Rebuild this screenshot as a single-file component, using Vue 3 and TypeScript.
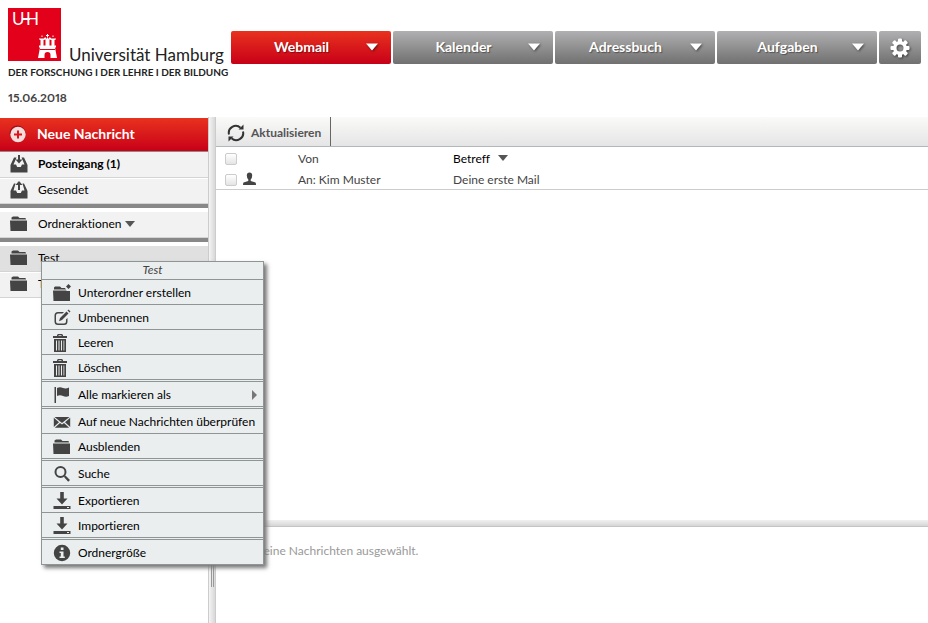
<script setup lang="ts">
import { ref } from 'vue'

interface MenuEntry {
  label: string
  icon: string
  groupStart?: boolean
  submenu?: boolean
}

const tabs = ['Webmail', 'Kalender', 'Adressbuch', 'Aufgaben']
const activeTab = ref('Webmail')
const selected = ref(false)
const allSelected = ref(false)

const icons: Record<string, string> = {
  folder: 'M1.500 4V2.500L3 1.500H8L9.500 3H15.500L16 4.500H1.500ZM0 5.500H17V16H.500Z',
  folderNew: 'M1 5V3.500L2 2.500H7L8.500 4H12L13 5.500H1ZM0 6.500H13L14 7H17V17H.500ZM15.500 0L18 2.500L15.500 5L13 2.500Z',
  inbox: 'M4 2.500H6.500L3.500 9.500H6L7.200 12H10.800L12 9.500H14.500L11.500 2.500H14L17.500 10V17.500H.500V10ZM8 0H10V4.500H12.500L9 8.500L5.500 4.500H8Z',
  sent: 'M4 2.500H5.500L3.500 9.500H6L7.200 12H10.800L12 9.500H14.500L12.500 2.500H14L17.500 10V17.500H.500V10ZM9 0L12.500 4H10V9H8V4H5.500Z',
  edit: 'M11 3H5Q1.500 3 1.500 6.500V12.500Q1.500 16 5 16H11Q14.500 16 14.500 12.500V9L13 10.500V12.500Q13 14.500 11 14.500H5Q3 14.500 3 12.500V6.500Q3 4.500 5 4.500H9.500ZM13.500 2.500L15.500 4.500L9 11L6 12.200L7 9ZM14.500 1.500L15.500.500L17.500 2.500L16.500 3.500Z',
  trash: 'M0 2H4V1L5 0H9L10 1V2H14V4H0ZM5.500 1.300V2H8.500V1.300ZM1 5H13V18H1ZM3 6.500V16.500H4V6.500ZM5.500 6.500V16.500H6.500V6.500ZM8 6.500V16.500H9V6.500ZM10.500 6.500V16.500H11.300V6.500Z',
  flag: 'M1.500 1H3V17H1.500ZM4 2Q7 .500 10 2Q13 3 16 1.500V10Q13 11.500 10 10Q7 8.500 4 10Z',
  mail: 'M1.500 4H16.500L9 10ZM.800 4.800L6 9.200L.800 14ZM17.200 4.800V14L12 9.200ZM1.800 14.800L7 10L9 11.600L11 10L16.200 14.800Z',
  search: 'M7.500 1A6 6 0 1 0 7.500 13A6 6 0 1 0 7.500 1ZM7.500 3A4 4 0 1 1 7.500 11A4 4 0 1 1 7.500 3ZM11 12L12.500 10.500L17 15L15.200 16.800Z',
  download: 'M7.200 0H10.800V6.500H14.500L9 12.500L3.500 6.500H7.200ZM.500 14H17.500V17H.500ZM14 15V16H16V15Z',
  info: 'M9 .800A8.200 8.200 0 1 0 9 17.200A8.200 8.200 0 1 0 9 .800ZM7.800 3.500H10.500V6H7.800ZM6.500 7.500H10.500V12.500H11.800V14H6.500V12.500H7.800V9H6.500Z',
  person: 'M8.500 1.500Q11.200 1.500 11.200 4.500Q11.200 7 9.700 8.500V10L14.500 11.500Q15 12 15 14H2Q2 12 2.500 11.500L7.300 10V8.500Q5.800 7 5.800 4.500Q5.800 1.500 8.500 1.500Z',
}

const menu: MenuEntry[] = [
  { label: 'Unterordner erstellen', icon: 'folderNew' },
  { label: 'Umbenennen', icon: 'edit' },
  { label: 'Leeren', icon: 'trash' },
  { label: 'Löschen', icon: 'trash' },
  { label: 'Alle markieren als', icon: 'flag', groupStart: true, submenu: true },
  { label: 'Auf neue Nachrichten überprüfen', icon: 'mail', groupStart: true },
  { label: 'Ausblenden', icon: 'folder' },
  { label: 'Suche', icon: 'search', groupStart: true },
  { label: 'Exportieren', icon: 'download', groupStart: true },
  { label: 'Importieren', icon: 'download' },
  { label: 'Ordnergröße', icon: 'info', groupStart: true },
]
</script>

<template>
  <div class="page">
    <header class="header">
      <div class="brand">
        <a class="logo" href="#">
          <span class="logo-row">
            <svg class="crest" viewBox="0 0 53 53" aria-hidden="true">
              <rect width="53" height="53" fill="#e2001a" />
              <g class="crest-text" fill="#fff">
                <text x="4" y="17">U</text>
                <text x="18" y="17">H</text>
                <rect x="14" y="10" width="8" height="2" />
              </g>
              <path
                fill="#fff"
                d="M30 50L32 39.500H31V37.500H32.500V32H31.500V30H32.500V31H33.500V30H34.500V31H35.500V30H36.500V32H35.500V37.500H37.500V31.500H36.500V29.500H38V30.500H39V29.500H40V30.500H41V29.500H42.500V31.500H41.500V37.500H43.500V32H42.500V30H43.500V31H44.500V30H45.500V31H46.500V30H47.500V32H46.500V37.500H48V39.500H47L49 50H42.500V47Q42.500 44 39.500 44Q36.500 44 36.500 47V50ZM39 26H40V27H41V28H40V29H39V28H38V27H39ZM33.500 27.500H34.500V29H33.500ZM44.500 27.500H45.500V29H44.500Z"
              />
              <path stroke="#e2001a" stroke-width="1" fill="none" d="M32 41.500H47" />
            </svg>
            <span class="wordmark">Universität Hamburg</span>
          </span>
          <span class="tagline">DER FORSCHUNG I DER LEHRE I DER BILDUNG</span>
        </a>
        <time class="date" datetime="2018-06-15">15.06.2018</time>
      </div>
      <nav class="tabs">
        <a
          v-for="tab in tabs"
          :key="tab"
          href="#"
          class="tab"
          :class="{ active: tab === activeTab }"
          @click.prevent="activeTab = tab"
        >
          <span class="tab-label">{{ tab }}</span>
          <svg class="tab-arrow" viewBox="0 0 12 8" aria-hidden="true"><path d="M0 .500H12L6 7.500Z" fill="#fff" /></svg>
        </a>
        <button class="settings" type="button" aria-label="Einstellungen">
          <svg viewBox="-10 -10 20 20" aria-hidden="true">
            <g fill="#fff">
              <rect v-for="n in 8" :key="n" x="-2" y="-9.500" width="4" height="5" rx="1" :transform="`rotate(${n * 45})`" />
            </g>
            <circle r="5.200" fill="none" stroke="#fff" stroke-width="3.400" />
          </svg>
        </button>
      </nav>
    </header>

    <div class="workspace">
      <aside class="sidebar">
        <button class="compose" type="button">
          <svg class="icon" viewBox="0 0 18 18" aria-hidden="true">
            <circle cx="8.500" cy="8.500" r="8" fill="#a30d14" />
            <circle cx="9" cy="9.500" r="7.700" fill="#f3dcdc" />
            <path d="M8 5.500H10V8.500H13V10.500H10V13.500H8V10.500H5V8.500H8Z" fill="#d9141c" />
          </svg>
          Neue Nachricht
        </button>
        <a class="folder unread" href="#">
          <svg class="icon" viewBox="0 0 18 18" aria-hidden="true"><path :d="icons.inbox" /></svg>
          Posteingang (1)
        </a>
        <a class="folder" href="#">
          <svg class="icon" viewBox="0 0 18 18" aria-hidden="true"><path :d="icons.sent" /></svg>
          Gesendet
        </a>
        <div class="rule"></div>
        <button class="folder" type="button">
          <svg class="icon" viewBox="0 0 18 18" aria-hidden="true"><path :d="icons.folder" /></svg>
          Ordneraktionen
          <svg class="caret" viewBox="0 0 10 6" aria-hidden="true"><path d="M0 0H10L5 6Z" /></svg>
        </button>
        <div class="rule"></div>
        <a class="folder current" href="#">
          <svg class="icon" viewBox="0 0 18 18" aria-hidden="true"><path :d="icons.folder" /></svg>
          Test
        </a>
        <a class="folder" href="#">
          <svg class="icon" viewBox="0 0 18 18" aria-hidden="true"><path :d="icons.folder" /></svg>
          Test
        </a>
      </aside>

      <div class="splitter"><span class="grip"></span></div>

      <main class="content">
        <div class="toolbar">
          <button class="refresh" type="button">
            <svg class="icon" viewBox="0 0 18 18" aria-hidden="true">
              <g fill="none" stroke="#333" stroke-width="2">
                <path d="M2 10.500A7 7 0 0 1 13.500 3.700" />
                <path d="M16 7.500A7 7 0 0 1 4.500 14.300" />
              </g>
              <path fill="#333" d="M11.500 5.500H16.500V.500ZM6.500 12.500H1.500V17.500Z" />
            </svg>
            Aktualisieren
          </button>
        </div>

        <table class="messages">
          <colgroup>
            <col class="col-check" />
            <col class="col-state" />
            <col class="col-from" />
            <col />
          </colgroup>
          <thead>
            <tr>
              <th><input v-model="allSelected" type="checkbox" aria-label="Alle auswählen" /></th>
              <th></th>
              <th>Von</th>
              <th class="sorted">
                Betreff
                <svg class="caret" viewBox="0 0 10 6" aria-hidden="true"><path d="M0 0H10L5 6Z" /></svg>
              </th>
            </tr>
          </thead>
          <tbody>
            <tr>
              <td><input v-model="selected" type="checkbox" aria-label="Nachricht auswählen" /></td>
              <td><svg class="icon" viewBox="0 0 18 18" aria-hidden="true"><path :d="icons.person" /></svg></td>
              <td>An: Kim Muster</td>
              <td>Deine erste Mail</td>
            </tr>
          </tbody>
        </table>

        <div class="preview-splitter"></div>
        <section class="preview">
          <p>Keine Nachrichten ausgewählt.</p>
        </section>
      </main>
    </div>

    <div class="context-menu" role="menu">
      <div class="menu-title">Test</div>
      <button
        v-for="entry in menu"
        :key="entry.label"
        class="menu-item"
        :class="{ 'group-start': entry.groupStart }"
        type="button"
        role="menuitem"
      >
        <svg class="icon" viewBox="0 0 18 18" aria-hidden="true"><path fill-rule="evenodd" :d="icons[entry.icon]" /></svg>
        <span class="menu-label">{{ entry.label }}</span>
        <svg v-if="entry.submenu" class="submenu" viewBox="0 0 5 10" aria-hidden="true"><path d="M0 0L5 5L0 10Z" /></svg>
      </button>
    </div>
  </div>
</template>

<style>
body {
  margin: 0;
  background: #fff;
}
</style>

<style scoped>
.page {
  position: relative;
  display: flex;
  flex-direction: column;
  min-height: 100vh;
  font-family: Lato, "Noto Sans", sans-serif;
  font-size: 12px;
  font-variant-ligatures: none;
  line-height: 16px;
  color: #444;
}

.page * {
  box-sizing: border-box;
}

a {
  color: inherit;
  text-decoration: none;
}

button {
  margin: 0;
  border: 0;
  font: inherit;
  font-variant-ligatures: none;
  text-align: left;
  cursor: pointer;
}

.icon {
  flex: none;
  display: block;
  width: 18px;
  height: 18px;
  fill: #444;
}

.caret {
  width: 10px;
  height: 6px;
  fill: #555;
}

.header {
  display: flex;
  align-items: flex-start;
  height: 117px;
  padding-right: 7px;
}

.brand {
  flex: none;
  width: 231px;
  padding: 8px 0 0 8px;
}

.logo,
.logo-row {
  display: flex;
}

.logo {
  flex-direction: column;
  white-space: nowrap;
  color: #222;
}

.logo-row {
  align-items: flex-end;
  gap: 8px;
}

.crest {
  width: 53px;
  height: 53px;
}

.crest-text {
  font-size: 17px;
}

.wordmark {
  font-size: 17px;
  line-height: 12px;
}

.tagline {
  margin-top: 4px;
  font-size: 10px;
  line-height: 14px;
  font-weight: 700;
}

.date {
  display: block;
  margin-top: 11px;
  font-weight: 700;
  font-variant-numeric: proportional-nums;
}

.tabs {
  flex: 1;
  display: flex;
  gap: 2px;
  padding-top: 31px;
}

.tab,
.settings {
  display: flex;
  align-items: center;
  height: 33px;
  border-radius: 2px;
  background: linear-gradient(#b0b0b2, #707070);
  color: #fff;
}

.tab {
  flex: 1;
  padding: 0 13px 2px 14px;
  font-size: 14px;
  font-weight: 700;
  text-shadow: 1px 1px 1px rgba(0, 0, 0, 0.4);
}

.tab.active {
  background: linear-gradient(#e8321e, #c80018);
}

.tab-label {
  flex: 1;
  padding-right: 8px;
  text-align: center;
}

.tab-arrow {
  width: 12px;
  height: 8px;
  filter: drop-shadow(1px 1px 1px rgba(0, 0, 0, 0.5));
}

.settings {
  flex: none;
  justify-content: center;
  width: 42px;
  padding: 0;
}

.settings svg {
  width: 20px;
  height: 20px;
  filter: drop-shadow(1px 1px 1px rgba(0, 0, 0, 0.5));
}

.workspace {
  flex: 1;
  display: flex;
}

.sidebar {
  flex: none;
  display: flex;
  flex-direction: column;
  width: 208px;
  padding-top: 1px;
}

.compose,
.folder {
  display: flex;
  align-items: center;
  gap: 10px;
  width: 100%;
  padding: 0 10px 2px;
}

.compose {
  height: 34px;
  padding-left: 9px;
  border-bottom: 1px solid #8a8a8a;
  background: linear-gradient(#e8321e, #c80018);
  color: #fff;
  font-size: 14px;
  font-weight: 700;
}

.folder {
  height: 26px;
  border-bottom: 1px solid #d4d4d4;
  background: #f2f2f2;
  color: #000;
}

.folder + .folder {
  border-top: 1px solid #fff;
}

.folder .caret {
  margin-left: -6px;
}

.unread {
  font-weight: 700;
}

.current {
  background: #e0e0e0;
}

.rule {
  height: 8px;
  border-top: 4px solid #888;
}

.splitter {
  flex: none;
  position: relative;
  width: 8px;
  border: solid #ccc;
  border-width: 0 1px;
  background: linear-gradient(90deg, #f4f4f4, #d8d8d8);
}

.grip {
  position: absolute;
  left: 2px;
  bottom: 36px;
  width: 3px;
  height: 60px;
  border: solid #999;
  border-width: 0 1px;
}

.content {
  flex: 1;
  display: flex;
  flex-direction: column;
  min-width: 0;
}

.toolbar {
  display: flex;
  height: 30px;
  border-bottom: 1px solid #b0b8ba;
  background: linear-gradient(#fafaf9, #e5e5e5);
}

.refresh {
  display: flex;
  align-items: center;
  gap: 6px;
  padding: 2px 9px 0 11px;
  border-right: 1px solid #666;
  background: none;
  color: #555;
  font-weight: 700;
}

.messages {
  width: 100%;
  table-layout: fixed;
  border-collapse: collapse;
  border-bottom: 1px solid #ccc;
}

.messages th,
.messages td {
  height: 21px;
  padding: 3px 0 0;
  font-weight: 400;
  text-align: left;
  vertical-align: middle;
}

.messages .sorted {
  color: #000;
}

.sorted .caret {
  margin: 0 0 2px 5px;
}

.col-check {
  width: 25px;
}

.col-state {
  width: 57px;
}

.col-from {
  width: 155px;
}

.messages input {
  display: block;
  appearance: none;
  width: 12px;
  height: 12px;
  margin: 0 0 0 9px;
  border: 1px solid #ccc;
  border-radius: 2px;
  background: linear-gradient(#fff, #e4e4e4);
}

.messages input:checked {
  background: #888;
}

.preview-splitter {
  height: 7px;
  margin-top: auto;
  border-bottom: 1px solid #c4c4c4;
  background: linear-gradient(#f0f0f0, #d6d6d6);
}

.preview {
  height: 96px;
  padding: 16px 40px;
  color: #999;
}

.preview p {
  margin: 0;
}

.context-menu {
  position: absolute;
  top: 261px;
  left: 41px;
  width: 223px;
  border: 1px solid #8f9494;
  background: #eaeeef;
  box-shadow: 3px 3px 4px #777;
  color: #000;
}

.menu-title {
  height: 17px;
  color: #444;
  font-style: italic;
  text-align: center;
}

.menu-item {
  display: flex;
  align-items: center;
  gap: 7px;
  width: 100%;
  height: 25px;
  padding: 1px 6px 0 11px;
  border-top: 1px solid #8f9494;
  background: none;
  color: #000;
}

.group-start {
  position: relative;
  margin-top: 2px;
}

.group-start::before {
  content: "";
  position: absolute;
  inset: -3px 0 auto;
  border-top: 1px solid #8f9494;
}

.menu-label {
  flex: 1;
  white-space: nowrap;
}

.submenu {
  width: 5px;
  height: 10px;
  fill: #777;
}
</style>
